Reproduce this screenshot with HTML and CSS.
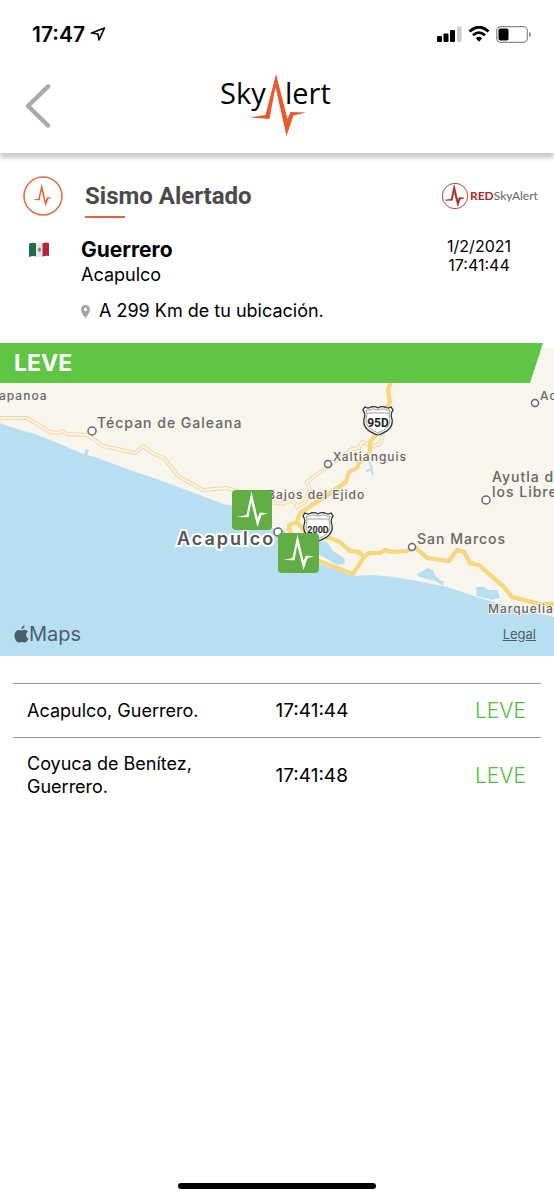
FILE: index.html
```html
<!DOCTYPE html>
<html lang="es">
<head>
<meta charset="utf-8">
<meta name="viewport" content="width=device-width, initial-scale=1">
<title>SkyAlert</title>
<link rel="stylesheet" href="styles.css">
</head>
<body>

<!-- Shared shapes -->
<svg class="defs" width="0" height="0" aria-hidden="true">
  <symbol id="pulse" viewBox="0 0 40 40">
    <path d="M5 27 L14.5 25 L19.5 1.5 L25.5 28 L28 22.5 L36 23.5 L29.5 25 L25.5 37 L19.2 12 L16.5 27.2 Z"/>
  </symbol>
  <symbol id="shield" viewBox="0 0 32 31">
    <path d="M3 2 Q6 4 9 2 Q13 1 16 3 Q19 1 23 2 Q26 4 29 2 L31 5 Q28 9 30 14 Q32 25 16 30 Q0 25 2 14 Q4 9 1 5 Z" fill="#fff" stroke="#333" stroke-width="1.3"/>
    <path d="M4 5 Q7 6 10 4 Q13 4 16 5 Q19 4 22 4 Q25 6 28 5 Q26 9 28 14 Q29 23 16 28 Q3 23 4 14 Q6 9 4 5 Z M5 8 H27" fill="none" stroke="#777" stroke-width="0.7"/>
  </symbol>
</svg>

<!-- Header -->
<header class="header">
  <div class="status-bar">
    <div class="clock">
      <span>17:47</span>
      <svg width="16" height="16" viewBox="0 0 16 16"><path d="M1.5 7 L14.5 2 L9 14 L8 8 Z" fill="none" stroke="#000" stroke-width="1.6" stroke-linejoin="round"/></svg>
    </div>
    <div class="indicators">
      <svg width="25" height="16" viewBox="0 0 25 16">
        <rect x="0" y="10" width="5" height="6" rx="1"/>
        <rect x="6.5" y="7.500" width="5" height="8.500" rx="1"/>
        <rect x="13" y="4" width="5" height="12" rx="1"/>
        <rect x="20" y="0.500" width="4.500" height="15.500" rx="1" fill="#ccc"/>
      </svg>
      <svg width="22" height="16" viewBox="0 0 22 16">
        <path d="M1.500 5.500 Q11 -3 20.500 5.500" fill="none" stroke="#000" stroke-width="3"/>
        <path d="M5 9.200 Q11 4 17 9.200" fill="none" stroke="#000" stroke-width="2.800"/>
        <path d="M7.800 12.200 Q11 9.500 14.200 12.200 L11 15.800 Z"/>
      </svg>
      <svg width="36" height="17" viewBox="0 0 36 17">
        <rect x="0.700" y="0.700" width="30.600" height="15.600" rx="4" fill="none" stroke="#888" stroke-width="1.200"/>
        <rect x="2.500" y="2.500" width="10" height="12" rx="2"/>
        <path d="M33 6 Q35 6.500 35 8.500 Q35 10.500 33 11 Z" fill="#888"/>
      </svg>
    </div>
  </div>
  <div class="navbar">
    <button class="back" type="button" aria-label="Atrás">
      <svg width="26" height="44" viewBox="0 0 26 44"><path d="M23 2.500 L3 22 L23 41.500" fill="none" stroke="#aaa" stroke-width="4.500" stroke-linecap="round" stroke-linejoin="round"/></svg>
    </button>
    <svg class="logo" width="114" height="64" viewBox="0 0 114 64" role="img" aria-label="SkyAlert">
      <text x="0" y="30">Sky</text>
      <text x="65" y="30">lert</text>
      <path d="M30 43.500 L45.500 41 L56 0 L67.500 45 L70.500 38 L86 38.500 L73.500 41.500 L66.500 62 L55.500 13 L49.500 45 Z" fill="#e8592b"/>
    </svg>
  </div>
</header>

<main>
  <!-- Alert summary -->
  <section class="summary">
    <div class="title-row">
      <svg class="alert-icon" width="40" height="40" viewBox="0 0 40 40">
        <circle cx="20" cy="20" r="19" fill="none" stroke="#e8704a" stroke-width="1.600"/>
        <use href="#pulse" x="6" y="6.500" width="26" height="26" fill="#e8592b"/>
      </svg>
      <h1>Sismo Alertado</h1>
      <svg class="red-logo" width="98" height="28" viewBox="0 0 98 28" role="img" aria-label="RED SkyAlert">
        <circle cx="15" cy="14" r="12.700" fill="none" stroke="#b04a4a" stroke-width="1"/>
        <use href="#pulse" x="2" y="2" width="25" height="24" fill="#9e2a2b" stroke="#9e2a2b"/>
        <text x="30" y="18"><tspan class="red">RED</tspan>SkyAlert</text>
      </svg>
    </div>
    <div class="place-row">
      <svg class="flag" width="22" height="16" viewBox="0 0 22 16">
        <path d="M8 1.200 Q11 2 14.500 1.200 V14.500 Q11 15.300 8 14.500 Z" fill="#e6e6e6"/>
        <path d="M1 1.500 Q5 0 8 1.200 V14.500 Q5 13.500 1 15 Z" fill="#1f6b4c"/>
        <path d="M14.500 1.200 Q18 0 21 1 V14 Q18 13.200 14.500 14.500 Z" fill="#b3273a"/>
        <path d="M9.800 8 Q11 4.500 12.500 6 L13 8.500 Q11 11 9.800 8 Z" fill="#7c7a5c"/>
      </svg>
      <div class="place">
        <h2>Guerrero</h2>
        <p>Acapulco</p>
      </div>
      <div class="date">
        <div>1/2/2021</div>
        <div>17:41:44</div>
      </div>
    </div>
    <p class="distance">
      <svg width="9" height="13" viewBox="0 0 9 13"><path d="M4.500 0 A4.500 4.500 0 0 0 0 4.500 C0 8 4.500 13 4.500 13 C4.500 13 9 8 9 4.500 A4.500 4.500 0 0 0 4.500 0 Z M4.500 2.800 A1.700 1.700 0 1 1 4.500 6.200 A1.700 1.700 0 1 1 4.500 2.800 Z" fill="#a5a5a5" fill-rule="evenodd"/></svg>
      A 299 Km de tu ubicación.
    </p>
  </section>

  <!-- Map -->
  <section class="map">
    <div class="level-banner">LEVE</div>
    <svg class="map-canvas" viewBox="0 348 554 308">
      <rect x="0" y="348" width="554" height="308" fill="#f8f5ed"/>
      <!-- Sea and lagoons -->
      <g fill="#b7dff1">
        <path d="M0 423 L20 430 L35 434 L60 444 L83 454 L95 457 L130 470 L165 482 L200 495 L223 504 L234 506 L258 517 L272 528 L284 530 L292 538 L300 552 L318 563 L353 576 L372 575 L394 577 L417 581 L447 587 L477 597 L510 607 L554 617 V656 H0 Z"/>
        <path d="M304 536 L319 540 L327 542 L333 551 L344 558 L345 564 L337 565 L327 559 L316 553 Z"/>
        <path d="M417 574 L423 571 L427 568 L433 570 L435 575 L440 580 L444 582 L443 586 L436 581 L430 580 L419 577 Z"/>
        <path d="M476 587 L484 587 L488 590 L498 590 L500 598 L492 600 L477 596 Z"/>
        <path d="M84 454 L86 449 L89 450 L87 456 Z"/>
      </g>
      <path d="M366 471 L372 469 L369 461 M371 469 L373 475" class="river"/>
      <!-- Minor roads -->
      <path class="minor" d="M0 418 H27 L50 432 L59 433 L62 431 L67 434 L88 435 L103 446 L135 453 L143 446 L152 453 L164 458 L178 476 L203 490 L227 488 L240 492"/>
      <path class="minor" d="M383 435 L380 444 L373 446 L362 442 L359 448 L352 449 L327 467 L307 482 L310 490 L304 503 L295 508"/>
      <path class="minor" d="M270 502 L283 504 L291 500 L298 506"/>
      <path class="minor-core" d="M0 418 H27 L50 432 L59 433 L62 431 L67 434 L88 435 L103 446 L135 453 L143 446 L152 453 L164 458 L178 476 L203 490 L227 488 L240 492"/>
      <path class="minor-core" d="M383 435 L380 444 L373 446 L362 442 L359 448 L352 449 L327 467 L307 482 L310 490 L304 503 L295 508"/>
      <path class="minor-core" d="M270 502 L283 504 L291 500 L298 506"/>
      <!-- Highways -->
      <g class="highway-edge">
        <path d="M392 378 L388 390 L390 402 L384 412 L378 428 L375 436 L370 442 V452 L359 463 L357 468 L349 472 L346 482 L329 494 L300 513 L297 522 L304 531 L330 538 L340 542 L350 551 L359 552 L364 557 L369 553 H380 L385 550 L392 552 L407 551 L415 547 L427 558 L449 561 L457 550 L464 552 L470 563 L479 565 L504 587 L512 597 L540 604 H554"/>
        <path d="M297 522 L289 525 L290 531 M288 528 L300 550 L317 560 L353 574 L364 557"/>
      </g>
      <g class="highway">
        <path d="M392 378 L388 390 L390 402 L384 412 L378 428 L375 436 L370 442 V452 L359 463 L357 468 L349 472 L346 482 L329 494 L300 513 L297 522 L304 531 L330 538 L340 542 L350 551 L359 552 L364 557 L369 553 H380 L385 550 L392 552 L407 551 L415 547 L427 558 L449 561 L457 550 L464 552 L470 563 L479 565 L504 587 L512 597 L540 604 H554"/>
        <path d="M297 522 L289 525 L290 531 M288 528 L300 550 L317 560 L353 574 L364 557"/>
      </g>
      <!-- Towns -->
      <g fill="#fff" stroke="#666" stroke-width="1.500">
        <circle cx="92" cy="431" r="4"/>
        <circle cx="328" cy="464" r="3.500"/>
        <circle cx="535" cy="403" r="3.500"/>
        <circle cx="486" cy="500" r="4"/>
        <circle cx="412" cy="547" r="3.500"/>
        <circle cx="278" cy="532" r="4"/>
      </g>
      <g class="labels">
        <text x="-1" y="400" class="small">apanoa</text>
        <text x="97" y="428">Técpan de Galeana</text>
        <text x="540" y="400" class="small">Ac</text>
        <text x="333" y="461" class="small">Xaltianguis</text>
        <text x="492" y="482">Ayutla d</text>
        <text x="492" y="497">los Libre</text>
        <text x="267" y="499" class="small">Bajos del Ejido</text>
        <text x="417" y="544">San Marcos</text>
        <text x="488" y="613" class="small">Marquelia</text>
        <text x="177" y="545" class="big">Acapulco</text>
      </g>
      <g class="shields">
        <use href="#shield" x="362" y="405" width="32" height="31"/>
        <text x="378" y="427">95D</text>
        <use href="#shield" x="302" y="511" width="32" height="31"/>
        <text x="318" y="533" class="long">200D</text>
      </g>
      <!-- Sensors -->
      <g>
        <rect x="232" y="490" width="40" height="40" rx="4" fill="#62ae45"/>
        <use href="#pulse" x="232" y="490" width="40" height="40" fill="#fff"/>
        <rect x="278" y="533" width="41" height="40" rx="4" fill="#62ae45"/>
        <use href="#pulse" x="278" y="533" width="40" height="40" fill="#fff"/>
      </g>
    </svg>
    <div class="map-footer">
      <span class="maps-brand">
        <svg width="15" height="18" viewBox="0 0 15 18"><path d="M10.500 0.500 Q10.500 3.800 7.300 4.300 Q7.300 1.200 10.500 0.500 Z M7.500 5.500 Q9 4.700 10.500 4.700 Q12.800 4.800 14 6.600 Q12 7.800 12 10 Q12 12.500 14.500 13.400 Q13 17.400 10.800 17.500 Q9.500 17 7.800 17 Q6.200 17.300 4.800 17.500 Q2.500 17.300 1 13.500 Q-0.500 9 2 6.200 Q4 4 7.500 5.500 Z" fill="#4b5e69"/></svg>Maps
      </span>
      <a href="#">Legal</a>
    </div>
  </section>

  <!-- Sensor readings -->
  <table class="readings">
    <tr>
      <td class="city">Acapulco, Guerrero.</td>
      <td class="time">17:41:44</td>
      <td class="level">LEVE</td>
    </tr>
    <tr>
      <td class="city">Coyuca de Benítez, Guerrero.</td>
      <td class="time">17:41:48</td>
      <td class="level">LEVE</td>
    </tr>
  </table>
</main>

<div class="home-bar"></div>

</body>
</html>
```
FILE: styles.css
```css
* {
  box-sizing: border-box;
}

body {
  margin: 0;
  min-height: 100vh;
  display: flex;
  flex-direction: column;
  font-family: Inter, "Liberation Sans", sans-serif;
  font-size: 18px;
  color: #000;
  background-color: #fff;
}

h1, h2, p {
  margin: 0;
}

svg {
  display: block;
  flex: none;
}

.defs {
  position: absolute;
}

/* Header */
.header {
  padding-bottom: 15px;
  background-color: #fff;
  box-shadow: 0 5px 4px #ccc;
}

.status-bar {
  display: flex;
  justify-content: space-between;
  align-items: center;
  height: 68px;
  padding: 0 22px 0 32px;
}

.clock {
  display: flex;
  align-items: center;
  gap: 5px;
  font-size: 21px;
  font-weight: 600;
}

.indicators {
  display: flex;
  align-items: center;
  gap: 6px;
}

.navbar {
  display: grid;
  grid-template-columns: 1fr auto 1fr;
  align-items: center;
  height: 70px;
  padding: 6px 25px 0;
}

.back {
  justify-self: start;
  padding: 0;
  border: 0;
  background: none;
  cursor: pointer;
}

.logo text {
  font-family: "Open Sans", sans-serif;
  font-size: 29px;
}

/* Alert summary */
.summary {
  padding: 22px 16px 20px 23px;
}

.title-row {
  display: flex;
  align-items: center;
  height: 42px;
}

.title-row h1 {
  margin-left: 22px;
  font-family: Roboto, sans-serif;
  font-size: 24px;
  line-height: 40px;
  color: #4a4a4a;
}

.title-row h1::after {
  content: "";
  display: block;
  width: 40px;
  height: 2px;
  margin-bottom: -2px;
  background-color: #e8623a;
}

.red-logo {
  margin-left: auto;
}

.red-logo text {
  font-family: Lato, sans-serif;
  font-size: 12px;
  fill: #666;
}

.red-logo .red {
  font-weight: bold;
  fill: #a62b2b;
}

.place-row {
  display: flex;
  margin-top: 20px;
}

.flag {
  margin: 5px 31px 0 5px;
}

.place h2 {
  font-size: 21px;
  line-height: 26px;
}

.place p {
  line-height: 24px;
}

.date {
  margin-left: auto;
  margin-right: 27px;
  font-size: 16px;
  line-height: 19px;
  text-align: center;
}

.distance {
  display: flex;
  align-items: center;
  gap: 9px;
  margin: 12px 0 0 58px;
  line-height: 24px;
}

/* Map */
.map {
  position: relative;
}

.level-banner {
  position: relative;
  z-index: 1;
  height: 40px;
  margin: 0 11px -35px 0;
  padding-left: 14px;
  font-size: 23px;
  font-weight: bold;
  line-height: 40px;
  color: #fff;
  background-color: #5fc645;
  clip-path: polygon(0 0, 100% 0, calc(100% - 13px) 100%, 0 100%);
}

.map-canvas {
  width: 100%;
  height: auto;
}

.river {
  fill: none;
  stroke: #b7dff1;
  stroke-width: 2;
}

.minor {
  fill: none;
  stroke: #f3d6a0;
  stroke-width: 4;
}

.minor-core {
  fill: none;
  stroke: #f8f5ed;
  stroke-width: 2;
}

.highway,
.highway-edge {
  fill: none;
  stroke: #f9d877;
  stroke-width: 3;
  stroke-linejoin: round;
}

.highway-edge {
  stroke: #f0cc78;
  stroke-width: 4;
}

.labels text {
  font-size: 14px;
  font-weight: 500;
  letter-spacing: 1px;
  fill: #666;
  stroke: #f8f5ed;
  stroke-width: 2px;
  paint-order: stroke;
}

.labels .small {
  font-size: 12px;
}

.labels .big {
  font-size: 18px;
  font-weight: 600;
  letter-spacing: 2px;
  fill: #555;
  stroke: #fff;
  stroke-width: 4px;
}

.shields text {
  font-family: Roboto, sans-serif;
  font-size: 12px;
  font-weight: bold;
  fill: #222;
  text-anchor: middle;
}

.shields .long {
  font-size: 9px;
}

.map-footer {
  position: absolute;
  left: 14px;
  right: 18px;
  bottom: 8px;
  display: flex;
  justify-content: space-between;
  align-items: center;
}

.maps-brand {
  display: flex;
  align-items: center;
  font-size: 20px;
  line-height: 28px;
  color: #4b5e69;
}

.map-footer a {
  font-size: 13px;
  color: #4b5e69;
}

/* Sensor readings */
.readings {
  width: calc(100% - 26px);
  margin: 27px 13px 0;
  border-collapse: collapse;
  table-layout: fixed;
}

.readings td {
  height: 54px;
  padding: 14px 15px 14px 14px;
  border-top: 1px solid #999;
  line-height: 23px;
}

.readings .city {
  width: 48%;
  padding-right: 50px;
}

.readings .time {
  padding-left: 9px;
  font-size: 19px;
}

.readings .level {
  font-size: 21px;
  font-weight: 300;
  text-align: right;
  color: #4fbf3c;
}

.home-bar {
  width: 198px;
  height: 6px;
  margin: auto auto 11px;
  border-radius: 3px;
  background-color: #000;
}
```
